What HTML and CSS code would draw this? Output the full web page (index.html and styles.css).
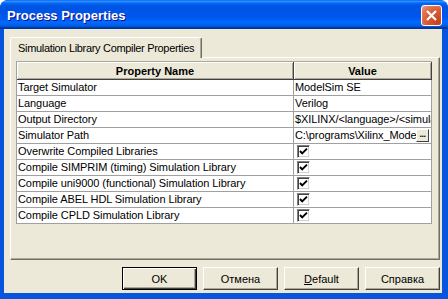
FILE: index.html
```html
<!DOCTYPE html>
<html lang="ru">
<head>
  <meta charset="UTF-8" />
  <title>Process Properties</title>
  <link rel="stylesheet" href="styles.css">
</head>
<body>
  <div class="window">

    <!-- Title bar -->
    <div class="titlebar">
      <span class="title">Process Properties</span>
      <button class="close-btn" aria-label="Close">
        <svg width="13" height="13" viewBox="0 0 13 13">
          <path d="M2 2 L11 11 M11 2 L2 11" stroke="#fff" stroke-width="2.2" />
        </svg>
      </button>
    </div>

    <div class="client">
      <!-- Tabs -->
      <div class="tabs">
        <div class="tab active">Simulation Library Compiler Properties</div>
      </div>

      <div class="panel">
        <table class="props">
          <thead>
            <tr>
              <th class="col-name">Property Name</th>
              <th class="col-value">Value</th>
            </tr>
          </thead>
          <tbody>
            <tr><td>Target Simulator</td><td>ModelSim SE</td></tr>
            <tr><td>Language</td><td>Verilog</td></tr>
            <tr><td>Output Directory</td><td>$XILINX/&lt;language&gt;/&lt;simulator&gt;</td></tr>
            <tr>
              <td>Simulator Path</td>
              <td>
                <div class="path-cell">
                  <span class="path-text">C:\programs\Xilinx_ModelSim</span>
                  <span class="browse">...</span>
                </div>
              </td>
            </tr>
            <tr><td>Overwrite Compiled Libraries</td><td><span class="check"></span></td></tr>
            <tr><td>Compile SIMPRIM (timing) Simulation Library</td><td><span class="check"></span></td></tr>
            <tr><td>Compile uni9000 (functional) Simulation Library</td><td><span class="check"></span></td></tr>
            <tr><td>Compile ABEL HDL Simulation Library</td><td><span class="check"></span></td></tr>
            <tr><td>Compile CPLD Simulation Library</td><td><span class="check"></span></td></tr>
          </tbody>
        </table>
      </div>

      <!-- Dialog buttons -->
      <div class="buttons">
        <button class="btn default">OK</button>
        <button class="btn">Отмена</button>
        <button class="btn"><u>D</u>efault</button>
        <button class="btn">Справка</button>
      </div>
    </div>
  </div>

  <script>
    // put the check mark in every checkbox cell
    const mark = '<svg width="9" height="9" viewBox="0 0 9 9"><path d="M1 4 L3.2 6.4 L8 1.6" fill="none" stroke="#000" stroke-width="2"/></svg>';
    document.querySelectorAll('.check').forEach(c => { c.innerHTML = mark; });
  </script>
</body>
</html>
```

FILE: styles.css
```css
body {
  margin: 0;
  background: #fff;
  font-family: 'Liberation Sans', Arial, sans-serif;
  font-size: 11px;
}

.window {
  width: 448px;
  height: 299px;
  display: flex;
  flex-direction: column;
  background: #0855dd;
  border-radius: 8px 8px 0 0;
  overflow: hidden;
}

.titlebar {
  height: 29px;
  flex: none;
  display: flex;
  align-items: center;
  justify-content: space-between;
  padding: 0 6px 0 7px;
  background: linear-gradient(180deg, #0058ee 0%, #3a93ff 4%, #288eff 6%, #127dff 8%, #036ffc 10%, #0262ee 14%, #0057e5 20%, #0054e3 24%, #0055eb 56%, #005bf5 66%, #026afe 76%, #0062ef 86%, #0052d6 92%, #0040ab 94%, #003092 100%);
}

.title {
  color: #fff;
  font-family: 'Liberation Sans', Arial, sans-serif;
  font-weight: bold;
  font-size: 13px;
  text-shadow: 1px 1px 0 #0f1089;
  margin-top: 2px;
}

.close-btn {
  width: 21px;
  height: 21px;
  padding: 0;
  border: 1px solid #fff;
  border-radius: 3px;
  background: radial-gradient(circle at 85% 85%, #c7401c 0%, #d95a35 50%, #e2795a 80%, #f0a58c 100%);
  display: flex;
  align-items: center;
  justify-content: center;
  margin-top: 2px;
}

.client {
  flex: 1;
  margin: 0 6px 6px 4px;
  padding: 8px 2px 3px 6px;
  background: #ece9d8;
  display: flex;
  flex-direction: column;
}

.tabs {
  display: flex;
  position: relative;
  z-index: 1;
  margin-bottom: -1px;
}

.tab {
  height: 21px;
  box-sizing: border-box;
  padding: 4px 7px 0 7px;
  background: #ece9d8;
  border: 1px solid #fff;
  border-right: 1px solid #716f64;
  border-bottom: none;
  border-radius: 2px 2px 0 0;
  box-shadow: inset -1px 0 0 #aca899;
  color: #000;
  white-space: nowrap;
  letter-spacing: -0.32px;
}

.panel {
  height: 203px;
  box-sizing: border-box;
  padding: 3px 5px 0 5px;
  border: 1px solid;
  border-color: #fff #716f64 #716f64 #fff;
  box-shadow: inset -1px -1px 0 #aca899;
}

.props {
  border-collapse: separate;
  border-spacing: 0;
  table-layout: fixed;
  width: 416px;
  background: #fff;
  border-left: 1px solid #a0a0a0;
  border-top: 1px solid #aca899;
}

.props th {
  height: 18px;
  box-sizing: border-box;
  padding: 0;
  background: #ece9d8;
  font-weight: bold;
  text-align: center;
  border-right: 1px solid #404040;
  border-bottom: 1px solid #404040;
  box-shadow: inset 1px 1px 0 #fff, inset -1px -1px 0 #aca899;
}

.col-name {
  width: 277px;
}

.col-value {
  width: 138px;
}

.props td {
  height: 16px;
  box-sizing: border-box;
  padding: 0 0 0 1px;
  border-right: 1px solid #a0a0a0;
  border-bottom: 1px solid #a0a0a0;
  white-space: nowrap;
  overflow: hidden;
  line-height: 15px;
  color: #000;
  letter-spacing: -0.08px;
}

.path-cell {
  display: flex;
  align-items: center;
  height: 15px;
}

.path-text {
  flex: 1;
  overflow: hidden;
  white-space: nowrap;
}

.browse {
  flex: none;
  width: 13px;
  height: 13px;
  box-sizing: border-box;
  margin-right: 2px;
  background: #ece9d8;
  border: 1px solid;
  border-color: #fff #404040 #404040 #fff;
  font-size: 9px;
  line-height: 8px;
  text-align: center;
  font-weight: bold;
  letter-spacing: -0.5px;
}

.check {
  display: inline-flex;
  align-items: center;
  justify-content: center;
  width: 13px;
  height: 13px;
  box-sizing: border-box;
  margin: 1px 0 0 2px;
  vertical-align: top;
  background: #fff;
  border: 1px solid;
  border-color: #808080 #fff #fff #808080;
  box-shadow: inset 1px 1px 0 #404040, inset -1px -1px 0 #d4d0c8;
}

.buttons {
  display: flex;
  justify-content: flex-end;
  gap: 6px;
  margin-top: 7px;
}

.btn {
  width: 75px;
  height: 23px;
  padding: 0;
  font-family: 'Liberation Sans', Arial, sans-serif;
  font-size: 11px;
  color: #000;
  background: #ece9d8;
  border: 1px solid;
  border-color: #fff #404040 #404040 #fff;
  box-shadow: inset -1px -1px 0 #aca899;
}

.btn.default {
  border: 1px solid #000;
  box-shadow: inset 1px 1px 0 #fff, inset -1px -1px 0 #404040, inset -2px -2px 0 #aca899;
}
```
